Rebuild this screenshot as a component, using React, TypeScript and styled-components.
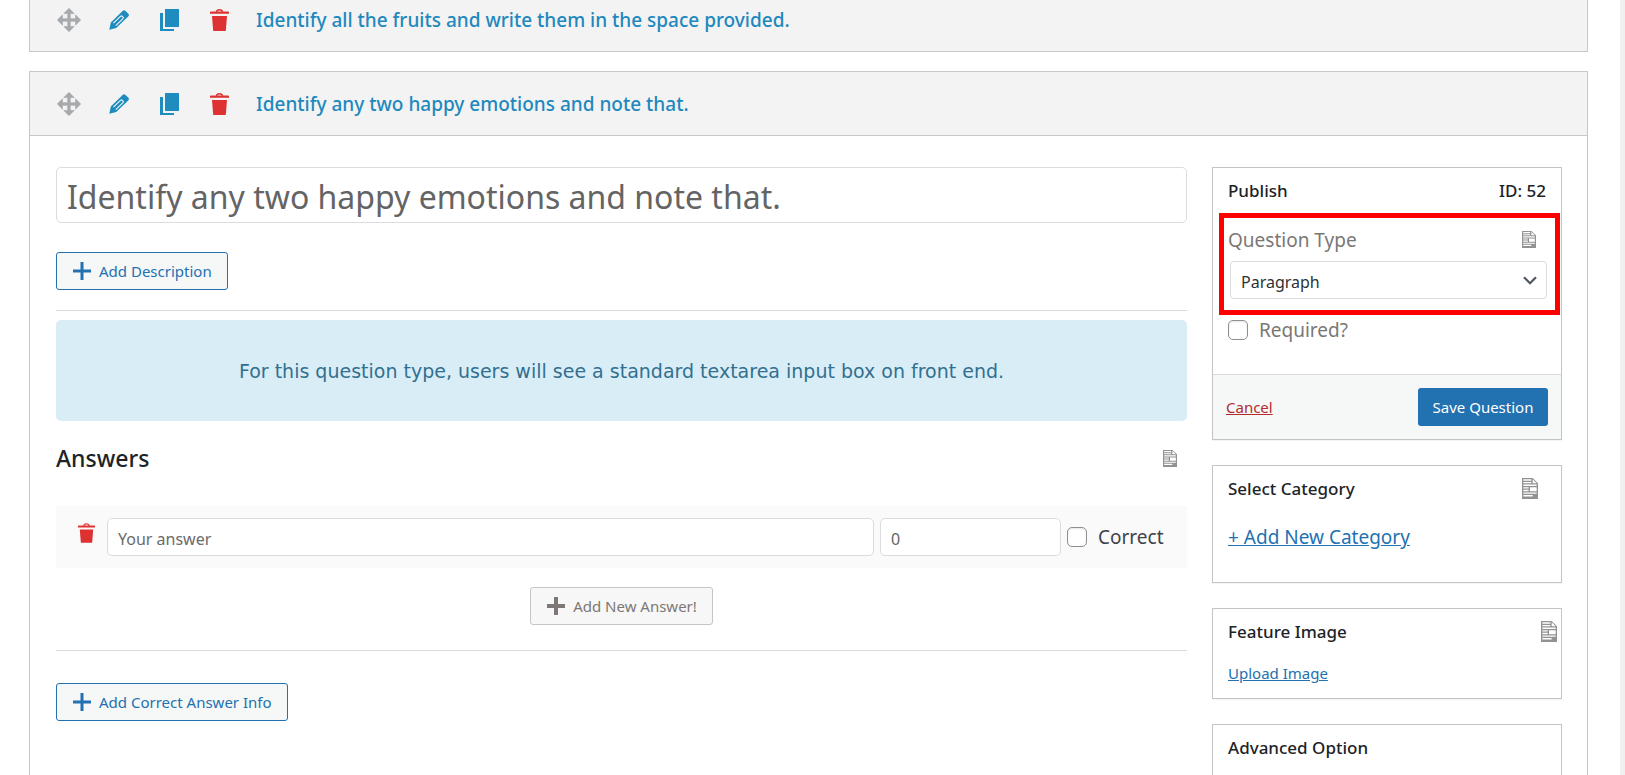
import React, { useState } from 'react';
import styled, { createGlobalStyle, css } from 'styled-components';

const blue = '#2271b1';
const sans = '"Segoe UI", "Noto Sans", sans-serif';

const GlobalStyle = createGlobalStyle`
  *, *::before, *::after { box-sizing: border-box; }
  body {
    margin: 0;
    background: #f0f0f1;
    font: 400 15px/20px ${sans};
    color: #3c434a;
  }
  button, input, select { font: inherit; color: inherit; margin: 0; }
  button { cursor: pointer; }
  h2, h3, p { margin: 0; }
`;

const Page = styled.main`
  min-height: 100vh;
  margin-right: 5px;
  padding: 0 32px 0 29px;
  background: #fff;
  display: flex;
  flex-direction: column;
  gap: 19px;
`;

const Question = styled.section<{ $open?: boolean }>`
  border: 1px solid #c5c7c9;
  ${({ $open }) =>
    $open
      ? css`
          flex: 1;
          border-bottom: 0;
          display: flex;
          flex-direction: column;
        `
      : css`
          border-top: 0;
        `}
`;

const QuestionBar = styled.header<{ $open?: boolean }>`
  display: flex;
  align-items: center;
  gap: 24px;
  padding: 0 26px ${({ $open }) => ($open ? '0' : '11px')};
  height: ${({ $open }) => ($open ? '64px' : '51px')};
  border-bottom: ${({ $open }) => ($open ? '1px solid #c5c7c9' : '0')};
  background: #f3f3f3;
`;

const IconButton = styled.button<{ $color: string; $width?: number }>`
  flex: none;
  display: flex;
  justify-content: center;
  width: ${({ $width = 26 }) => $width}px;
  padding: 0;
  border: 0;
  background: none;
  color: ${({ $color }) => $color};
`;

const QuestionName = styled.h2`
  font-size: 19px;
  line-height: 24px;
  font-weight: 500;
  color: #2188be;
`;

const Editor = styled.div`
  flex: 1;
  display: flex;
  gap: 25px;
  padding: 31px 25px 0 26px;
`;

const Content = styled.div`
  flex: 1;
  min-width: 0;
  display: flex;
  flex-direction: column;
  align-items: stretch;
`;

const TextBox = styled.input<{ $title?: boolean }>`
  display: block;
  min-width: 0;
  width: 100%;
  height: ${({ $title }) => ($title ? '56px' : '38px')};
  padding: 3px 10px 0;
  border: 1px solid #dcdcde;
  border-radius: 5px;
  background: #fff;
  font-size: ${({ $title }) => ($title ? '32px' : '16px')};
  color: #646464;
  &::placeholder { color: #6b6b6b; opacity: 1; }
`;

const ActionButton = styled.button<{ $muted?: boolean }>`
  display: flex;
  align-items: center;
  gap: 8px;
  height: 38px;
  padding: 0 15px 0 16px;
  border: 1px solid ${({ $muted }) => ($muted ? '#c5c5c5' : blue)};
  border-radius: 3px;
  background: ${({ $muted }) => ($muted ? '#f7f7f7' : '#f6f7f7')};
  color: ${({ $muted }) => ($muted ? '#7d7875' : blue)};
`;

const ActionRow = styled.div<{ $center?: boolean; $top: number }>`
  display: flex;
  justify-content: ${({ $center }) => ($center ? 'center' : 'flex-start')};
  padding-top: ${({ $top }) => $top}px;
`;

const Rule = styled.hr<{ $top: number }>`
  width: 100%;
  margin: ${({ $top }) => $top}px 0 0;
  border: 0;
  border-top: 1px solid #d9dadb;
`;

const Notice = styled.p`
  margin-top: 9px;
  padding: 39px 16px 38px;
  border-radius: 5px;
  background: #d9edf7;
  color: #31708f;
  text-align: center;
  font: 400 19px/24px Verdana, "DejaVu Sans", sans-serif;
`;

const AnswersHead = styled.div`
  display: flex;
  align-items: center;
  justify-content: space-between;
  height: 36px;
  margin: 19px 0 30px;
  padding-right: 10px;
  h2 {
    font-size: 23px;
    line-height: 32px;
    font-weight: 500;
    color: #1d2327;
  }
`;

const AnswerRow = styled.div`
  display: flex;
  gap: 6px;
  padding: 12px 0 12px 19px;
  background: #fafafa;
`;

const AnswerDelete = styled.div`
  padding: 5px 4px 0 0;
`;

const Points = styled.div`
  flex: none;
  width: 181px;
`;

const Check = styled.label<{ $width?: number }>`
  flex: none;
  display: flex;
  align-items: center;
  gap: 11px;
  width: ${({ $width }) => ($width ? `${$width}px` : 'auto')};
  font-size: 19px;
  line-height: 24px;
`;

const Tick = styled.input`
  appearance: none;
  flex: none;
  width: 20px;
  height: 20px;
  border: 1px solid #8c8f94;
  border-radius: 5px;
  background: #fff;
  box-shadow: inset 0 1px 2px rgba(0, 0, 0, 0.1);
  &:checked { background: ${blue}; }
`;

const Sidebar = styled.aside`
  flex: none;
  width: 350px;
  display: flex;
  flex-direction: column;
  gap: 25px;
`;

const Card = styled.section<{ $last?: boolean }>`
  border: 1px solid #c3c4c7;
  box-shadow: 0 1px 1px rgba(0, 0, 0, 0.04);
  ${({ $last }) =>
    $last &&
    css`
      flex: 1;
      border-bottom: 0;
    `}
`;

const CardHead = styled.header<{ $right?: number }>`
  display: flex;
  align-items: center;
  justify-content: space-between;
  height: 45px;
  padding: 0 ${({ $right = 15 }) => $right}px 0 15px;
  font-size: 17px;
  line-height: 24px;
  font-weight: 500;
  color: #1d2327;
  h3 { font: inherit; }
`;

const CardBody = styled.div<{ $bottom: number }>`
  padding: 4px 15px ${({ $bottom }) => $bottom}px;
`;

const Link = styled.a<{ $tone?: 'danger'; $large?: boolean }>`
  font-size: ${({ $large }) => ($large ? '19px' : '15px')};
  line-height: ${({ $large }) => ($large ? '44px' : '30px')};
  color: ${({ $tone }) => ($tone === 'danger' ? '#b32d2e' : blue)};
  display: inline-block;
`;

const Highlight = styled.div`
  margin: 0 1px 0 6px;
  padding: 0 8px 11px 4px;
  border: 5px solid #f00;
`;

const FieldLabel = styled.div`
  display: flex;
  align-items: center;
  justify-content: space-between;
  height: 43px;
  padding-right: 11px;
  font-size: 19px;
  line-height: 24px;
  color: #7a7775;
`;

const SelectWrap = styled.div`
  display: grid;
  align-items: center;
  margin-left: 2px;
  > * { grid-area: 1 / 1; }
  svg { justify-self: end; margin-right: 10px; pointer-events: none; }
`;

const Select = styled.select`
  appearance: none;
  width: 100%;
  height: 38px;
  padding: 3px 28px 0 10px;
  border: 1px solid #dcdcde;
  border-radius: 4px;
  background: #fff;
  font-size: 16px;
  color: #2c3338;
`;

const Required = styled.div`
  height: 59px;
  padding: 3px 15px 0;
  color: #7a7775;
`;

const CardFoot = styled.footer`
  display: flex;
  align-items: center;
  justify-content: space-between;
  height: 65px;
  padding: 0 13px;
  border-top: 1px solid #dcdcde;
  background: #f6f7f7;
`;

const Primary = styled.button`
  height: 38px;
  width: 130px;
  padding: 0;
  border: 0;
  border-radius: 3px;
  background: ${blue};
  color: #fff;
`;

const MoveIcon = () => (
  <svg width="28" height="28" viewBox="0 0 20 20" fill="currentColor" stroke="currentColor" strokeWidth=".5" aria-hidden="true">
    <path d="M19 10l-4 4v-3h-4v4h3l-4 4-4-4h3v-4H5v3l-4-4 4-4v3h4V5H6l4-4 4 4h-3v4h4V6z" />
  </svg>
);

const PencilIcon = () => (
  <svg width="20" height="20" viewBox="0 0 20 20" aria-hidden="true">
    <path fill="currentColor" d="M.3 19.7 1.8 12.6 13.6 1a2 2 0 0 1 2.9 0l2.7 2.6a2 2 0 0 1 0 2.9L7.2 18.1z" />
    <path fill="none" stroke="#f3f3f3" strokeWidth="1.1" d="M4.400 13.200 12 5.8M6.800 15.700l7.700-7.600M12.300 5.500l2.400 2.400" />
  </svg>
);

const CopyIcon = () => (
  <svg width="19" height="22" viewBox="0 0 19 22" fill="currentColor" aria-hidden="true">
    <path d="M5 0h14v18H5zM0 4h3v16h11v2H0z" />
  </svg>
);

const TrashIcon = ({ size = 19 }: { size?: number }) => (
  <svg width={size} height={Math.round((size * 22) / 19)} viewBox="0 0 19 22" fill="currentColor" aria-hidden="true">
    <path d="M0 3.300c0-.5.4-.8.9-.8h17.200c.5 0 .9.3.9.8v1.500H0zM2 7h15l-1.100 14c0 .6-.5 1-1 1H4.100c-.6 0-1-.4-1-1z" />
    <path fill="none" stroke="currentColor" strokeWidth="1.300" d="M6.500 3c.3-3 5.700-3 6 0" />
  </svg>
);

const PlusIcon = ({ weight }: { weight: number }) => (
  <svg width="18" height="18" viewBox="0 0 18 18" stroke="currentColor" strokeWidth={weight} aria-hidden="true">
    <path d="M0 9h18M9 0v18" />
  </svg>
);

const DocIcon = ({ large }: { large?: boolean }) => (
  <svg
    width={large ? 16 : 14}
    height={large ? 21 : 17}
    viewBox="4 2 12 16"
    preserveAspectRatio="none"
    fill="#929292"
    aria-hidden="true"
  >
    <path d="M12 2l4 4v12H4V2h8zM5 3v1h6V3H5zm7 3h3l-3-3v3zM5 5v1h6V5H5zm10 3V7H5v1h10zM5 9v1h4V9H5zm10 3V9h-5v3h5zM5 11v1h4v-1H5zm10 3v-1H5v1h10zm-3 2v-1H5v1h7z" />
  </svg>
);

const Chevron = () => (
  <svg width="14" height="9" viewBox="0 0 14 9" fill="none" stroke="#50575e" strokeWidth="2.200" aria-hidden="true">
    <path d="M1 1.200l6 6 6-6" />
  </svg>
);

function QuestionHeader({ title, open }: { title: string; open?: boolean }) {
  return (
    <QuestionBar $open={open}>
      <IconButton type="button" $color="#a7aaad" aria-label="Move question"><MoveIcon /></IconButton>
      <IconButton type="button" $color="#1e8cbe" aria-label="Edit question"><PencilIcon /></IconButton>
      <IconButton type="button" $color="#1e8cbe" aria-label="Duplicate question"><CopyIcon /></IconButton>
      <IconButton type="button" $color="#dd3231" aria-label="Delete question"><TrashIcon /></IconButton>
      <QuestionName>{title}</QuestionName>
    </QuestionBar>
  );
}

export default function App() {
  const [title, setTitle] = useState('Identify any two happy emotions and note that.');
  return (
    <>
      <GlobalStyle />
      <Page>
        <Question>
          <QuestionHeader title="Identify all the fruits and write them in the space provided." />
        </Question>
        <Question $open>
          <QuestionHeader open title="Identify any two happy emotions and note that." />
          <Editor>
            <Content>
              <TextBox $title aria-label="Question title" value={title} onChange={(e) => setTitle(e.target.value)} />
              <ActionRow $top={29}>
                <ActionButton type="button"><PlusIcon weight={3} />Add Description</ActionButton>
              </ActionRow>
              <Rule $top={20} />
              <Notice>For this question type, users will see a standard textarea input box on front end.</Notice>
              <AnswersHead>
                <h2>Answers</h2>
                <DocIcon />
              </AnswersHead>
              <AnswerRow>
                <AnswerDelete>
                  <IconButton type="button" $color="#dd3231" $width={22} aria-label="Delete answer">
                    <TrashIcon size={17} />
                  </IconButton>
                </AnswerDelete>
                <TextBox placeholder="Your answer" aria-label="Your answer" />
                <Points>
                  <TextBox defaultValue="0" aria-label="Points" />
                </Points>
                <Check $width={120}>
                  <Tick type="checkbox" />
                  Correct
                </Check>
              </AnswerRow>
              <ActionRow $center $top={19}>
                <ActionButton type="button" $muted><PlusIcon weight={4} />Add New Answer!</ActionButton>
              </ActionRow>
              <Rule $top={25} />
              <ActionRow $top={32}>
                <ActionButton type="button"><PlusIcon weight={3} />Add Correct Answer Info</ActionButton>
              </ActionRow>
            </Content>
            <Sidebar>
              <Card>
                <CardHead>
                  <h3>Publish</h3>
                  <span>ID: 52</span>
                </CardHead>
                <Highlight>
                  <FieldLabel>
                    <label htmlFor="question-type">Question Type</label>
                    <DocIcon />
                  </FieldLabel>
                  <SelectWrap>
                    <Select id="question-type" defaultValue="Paragraph">
                      <option>Paragraph</option>
                    </Select>
                    <Chevron />
                  </SelectWrap>
                </Highlight>
                <Required>
                  <Check>
                    <Tick type="checkbox" />
                    Required?
                  </Check>
                </Required>
                <CardFoot>
                  <Link href="#cancel" $tone="danger">Cancel</Link>
                  <Primary type="button">Save Question</Primary>
                </CardFoot>
              </Card>
              <Card>
                <CardHead $right={23}>
                  <h3>Select Category</h3>
                  <DocIcon large />
                </CardHead>
                <CardBody $bottom={23}>
                  <Link href="#category" $large>+ Add New Category</Link>
                </CardBody>
              </Card>
              <Card>
                <CardHead $right={4}>
                  <h3>Feature Image</h3>
                  <DocIcon large />
                </CardHead>
                <CardBody $bottom={10}>
                  <Link href="#image">Upload Image</Link>
                </CardBody>
              </Card>
              <Card $last>
                <CardHead>
                  <h3>Advanced Option</h3>
                </CardHead>
              </Card>
            </Sidebar>
          </Editor>
        </Question>
      </Page>
    </>
  );
}
